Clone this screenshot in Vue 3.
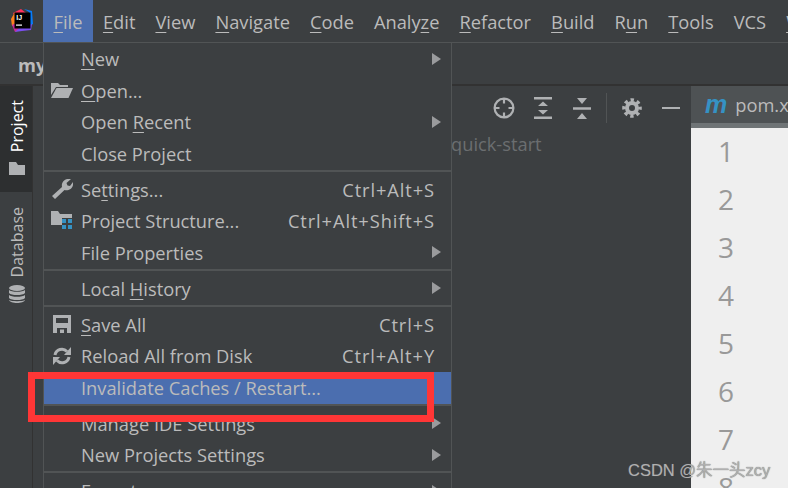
<script setup>
const menuBar = [
  ['', 'F', 'ile'], ['', 'E', 'dit'], ['', 'V', 'iew'], ['', 'N', 'avigate'], ['', 'C', 'ode'],
  ['Analy', 'z', 'e'], ['', 'R', 'efactor'], ['', 'B', 'uild'], ['R', 'u', 'n'], ['', 'T', 'ools'],
  ['VCS', '', ''], ['', 'W', 'indow']
]
const groups = [
  [
    { a: '', k: 'N', b: 'ew', arrow: true },
    { a: '', k: 'O', b: 'pen...', icon: 'open' },
    { a: 'Open ', k: 'R', b: 'ecent', arrow: true },
    { a: 'Close Project', k: '', b: '' }
  ],
  [
    { a: 'Se', k: 't', b: 'tings...', icon: 'wrench', sc: 'Ctrl+Alt+S' },
    { a: 'Project Structure...', k: '', b: '', icon: 'struct', sc: 'Ctrl+Alt+Shift+S' },
    { a: 'File Properties', k: '', b: '', arrow: true }
  ],
  [{ a: 'Local ', k: 'H', b: 'istory', arrow: true }],
  [
    { a: '', k: 'S', b: 'ave All', icon: 'save', sc: 'Ctrl+S' },
    { a: 'Reload All from Disk', k: '', b: '', icon: 'reload', sc: 'Ctrl+Alt+Y' },
    { a: 'Invalidate Caches / Restart...', k: '', b: '', active: true }
  ],
  [
    { a: 'Manage IDE Settings', k: '', b: '', arrow: true },
    { a: 'New Projects Settings', k: '', b: '', arrow: true }
  ],
  [{ a: 'Export', k: '', b: '', arrow: true }]
]
const lines = [1, 2, 3, 4, 5, 6, 7, 8]
</script>

<template>
  <div class="app">
    <header class="menubar">
      <svg class="logo" width="24" height="24" viewBox="0 0 24 24">
        <path d="M3 4 L11 0 L16 4 L4 6 Z" fill="#fe315d" />
        <path d="M1 10 L5 3 L6 17 L2 17 Z" fill="#fc801d" />
        <path d="M2 16 L6 14 L11 20 L5 23 Z" fill="#c92a9b" />
        <path d="M14 0 L22 2 L23 15 L20 17 L19 3 Z" fill="#087cfa" />
        <path d="M5 23 L10 18 L22 15 L21 21 L12 22 Z" fill="#7b4ff0" />
        <rect x="4.5" y="3.5" width="16" height="16" fill="#000" />
        <text x="6.2" y="11" class="logo-text">IJ</text>
        <rect x="6" y="15.5" width="6" height="1.2" fill="#fff" />
      </svg>
      <div v-for="(m, i) in menuBar" :key="i" class="bar-item" :class="{ open: i === 0 }">
        {{ m[0] }}<u v-if="m[1]">{{ m[1] }}</u>{{ m[2] }}
      </div>
    </header>

    <div class="navbar"><b>my-app</b></div>

    <div class="workspace">
      <aside class="stripe">
        <div class="tool-tab selected">
          <span class="vert">Project</span>
          <svg width="16" height="13" viewBox="0 0 16 13"><path d="M0 0h7l2 3h7v10H0z" fill="#afb1b3" /></svg>
        </div>
        <div class="tool-tab">
          <span class="vert">Database</span>
          <svg width="16" height="18" viewBox="0 0 16 18">
            <g fill="#afb1b3">
              <ellipse cx="8" cy="3" rx="8" ry="3" />
              <path d="M0 5c2 2.4 14 2.4 16 0v3c-2 2.8-14 2.8-16 0z" />
              <path d="M0 10c2 2.4 14 2.4 16 0v3c-2 2.8-14 2.8-16 0z" />
              <path d="M0 15c2 1.6 14 1.6 16 0c-1 4-15 4-16 0z" />
            </g>
          </svg>
        </div>
      </aside>

      <section class="panel">
        <div class="panel-tools">
          <span class="slot">
            <svg width="22" height="22" viewBox="0 0 22 22" fill="none" stroke="#afb1b3" stroke-width="2.2">
              <circle cx="11" cy="11" r="9.400" />
              <path d="M11 2v4.500M11 15.500V20M2 11h4.500M15.500 11H20" />
            </svg>
          </span>
          <span class="slot">
            <svg width="18" height="22" viewBox="0 0 18 22" fill="#afb1b3">
              <path d="M0 0h18v2.400H0zM0 19.600h18V22H0zM9 4.500l5 4.500H4zM9 17.500l-5-4.500h10z" />
            </svg>
          </span>
          <span class="slot">
            <svg width="18" height="21" viewBox="0 0 18 21" fill="#afb1b3">
              <path d="M4 0h10l-5 6zM0 9.300h18v2.400H0zM9 15l5 6H4z" />
            </svg>
          </span>
          <span class="tool-sep"></span>
          <span class="slot">
            <svg width="20" height="20" viewBox="0 0 20 20" fill="none" stroke="#afb1b3">
              <circle cx="10" cy="10" r="5" stroke-width="4" />
              <circle cx="10" cy="10" r="8" stroke-width="3.600" stroke-dasharray="3.300 2.983" stroke-dashoffset="1.650" />
            </svg>
          </span>
          <span class="slot"><i class="tool-min"></i></span>
        </div>
        <div class="tree-row">quick-start</div>
      </section>

      <main class="editor">
        <div class="tab"><em>m</em><span>pom.xml</span></div>
        <div class="tab-line"></div>
        <div class="gutter">
          <div v-for="n in lines" :key="n" class="num">{{ n }}</div>
        </div>
      </main>
    </div>

    <nav class="menu">
      <div v-for="(g, gi) in groups" :key="gi" class="group">
        <div v-for="(it, ii) in g" :key="ii" class="row" :class="{ active: it.active }">
          <span class="ico">
            <svg v-if="it.icon === 'open'" width="22" height="15" viewBox="0 0 22 15" fill="#afb1b3">
              <path d="M0 0h7l2 2h8v2H5L0 12z" />
              <path d="M5.500 5H22l-4.500 10H0z" />
            </svg>
            <svg v-else-if="it.icon === 'wrench'" width="21" height="20" viewBox="0 0 21 20" fill="#afb1b3">
              <path d="M0 17 L10 8 C9 3 13 -1 19 0 L14.500 4 L15.500 6.500 L18 7 L21 3 C22 9 17 12 12.500 11 L3 20 Z" />
            </svg>
            <svg v-else-if="it.icon === 'struct'" width="22" height="19" viewBox="0 0 22 19">
              <path d="M0 0h7l2 3h12v4H11v7H0z" fill="#afb1b3" />
              <path d="M11 8h4v4h-4zM17 8h4v4h-4zM11 14h4v4h-4zM17 14h4v4h-4z" fill="#3592c4" />
            </svg>
            <svg v-else-if="it.icon === 'save'" width="18" height="18" viewBox="0 0 18 18">
              <path d="M0 0h18v18H0z" fill="#afb1b3" />
              <path d="M3 3h12v5H3zM4 13h10v5H4z" fill="#3c3f41" />
              <path d="M7 14.500h4V18H7z" fill="#afb1b3" />
            </svg>
            <svg v-else-if="it.icon === 'reload'" width="18" height="18" viewBox="0 0 18 18" fill="none" stroke="#afb1b3" stroke-width="3">
              <path d="M2 8a7 7 0 0 1 12-3.500" />
              <path d="M16 10a7 7 0 0 1-12 3.500" />
              <path d="M18 0v8h-7zM0 18v-8h7z" fill="#afb1b3" stroke="none" />
            </svg>
          </span>
          <span class="label">{{ it.a }}<u v-if="it.k">{{ it.k }}</u>{{ it.b }}</span>
          <span v-if="it.sc" class="shortcut">{{ it.sc }}</span>
          <i v-if="it.arrow" class="arrow"></i>
        </div>
      </div>
    </nav>

    <div class="red-box"></div>
    <div class="watermark">CSDN @朱一头zcy</div>
  </div>
</template>

<style>
html, body { margin: 0; background: #3c3f41; }
</style>

<style scoped>
.app {
  position: relative;
  width: 788px;
  height: 488px;
  overflow: hidden;
  background: #3c3f41;
  color: #bbbbbb;
  font-family: "Open Sans", "Noto Sans", sans-serif;
  font-size: 18.300px;
  display: flex;
  flex-direction: column;
}
u { text-underline-offset: 3px; text-decoration-thickness: 1px; }

.menubar {
  height: 42px;
  flex: none;
  display: flex;
  align-items: stretch;
  white-space: nowrap;
  border-bottom: 1px solid #515455;
  padding-left: 10px;
}
.logo { width: 24px; height: 24px; margin: 9px 9px 0 0; flex: none; }
.logo-text { font: 700 7px "Liberation Sans", sans-serif; fill: #fff; }
.bar-item { padding: 0 10px; line-height: 43px; }
.bar-item.open { background: #4b6eaf; padding: 0 10.500px; }

.navbar {
  height: 43px;
  flex: none;
  box-sizing: border-box;
  padding-left: 18px;
  line-height: 44px;
  border-bottom: 2px solid #323232;
}
.navbar b { font-weight: 700; color: #bbb; }

.workspace { flex: 1; display: flex; min-height: 0; }

.stripe {
  width: 33px;
  flex: none;
  box-sizing: border-box;
  border-right: 1px solid #323232;
  display: flex;
  flex-direction: column;
}
.tool-tab {
  display: flex;
  flex-direction: column;
  align-items: center;
  gap: 8px;
  padding: 15px 0 0 2px;
  font-size: 16px;
}
.tool-tab.selected { height: 106px; box-sizing: border-box; padding-top: 14px; gap: 10px; background: #2d2f30; color: #fff; }
.vert { writing-mode: vertical-rl; transform: rotate(180deg); line-height: 30px; }

.panel { flex: 1; min-width: 0; }
.panel-tools {
  height: 44px;
  display: flex;
  align-items: center;
  justify-content: flex-end;
  padding-right: 1px;
}
.slot { width: 39px; height: 24px; display: flex; align-items: center; justify-content: center; flex: none; }
.tool-sep { width: 1px; height: 30px; background: #515455; margin: 0 5px; flex: none; }
.tool-min { width: 18px; height: 2.500px; background: #afb1b3; }
.tree-row {
  padding: 2px 0 0 418px;
  color: #6b6e70;
  line-height: 24px;
}

.editor { width: 97px; flex: none; background: #efefef; display: flex; flex-direction: column; overflow: hidden; }
.tab {
  height: 37px;
  flex: none;
  background: #4e5254;
  display: flex;
  align-items: center;
  padding-left: 14px;
  gap: 8px;
  white-space: nowrap;
  overflow: hidden;
}
.tab em {
  font: italic 700 25px "Liberation Sans", sans-serif;
  color: #3592c4;
  line-height: 1;
}
.tab-line { height: 5px; background: #6f7476; flex: none; }
.gutter { flex: 1; min-height: 0; overflow: hidden; }
.num {
  height: 48px;
  line-height: 46px;
  font-size: 28px;
  color: #999;
  padding-left: 27px;
}

.menu {
  position: absolute;
  left: 43px;
  top: 43px;
  width: 409px;
  height: 445px;
  box-sizing: border-box;
  background: #3c3f41;
  border-left: 1px solid #515455;
  border-right: 1px solid #515455;
  padding-top: 0.500px;
  overflow: hidden;
}
.group + .group { border-top: 2px solid #515455; padding-top: 2.500px; }
.row {
  height: 31.500px;
  box-sizing: border-box;
  padding-bottom: 1.500px;
  display: flex;
  align-items: center;
  white-space: nowrap;
  position: relative;
}
.row.active { background: #4b6eaf; }
.ico { width: 37px; flex: none; display: flex; justify-content: center; padding-right: 1px; box-sizing: border-box; }
.label { flex: 1; }
.shortcut { margin-right: 16px; letter-spacing: 0.900px; }
.arrow {
  position: absolute;
  right: 10px;
  top: 9px;
  width: 0;
  height: 0;
  border-left: 9px solid #9a9b9d;
  border-top: 6.500px solid transparent;
  border-bottom: 6.500px solid transparent;
}

.red-box {
  position: absolute;
  left: 28px;
  top: 372px;
  width: 406px;
  height: 50px;
  box-sizing: border-box;
  border: 7px solid #ff3636;
}
.watermark {
  position: absolute;
  left: 628px;
  top: 457px;
  font-family: "Liberation Sans", "Noto Sans CJK SC", sans-serif;
  font-size: 16.500px;
  color: #b0b0b0;
  text-shadow: 0 0 1px #666;
  white-space: nowrap;
}
</style>
